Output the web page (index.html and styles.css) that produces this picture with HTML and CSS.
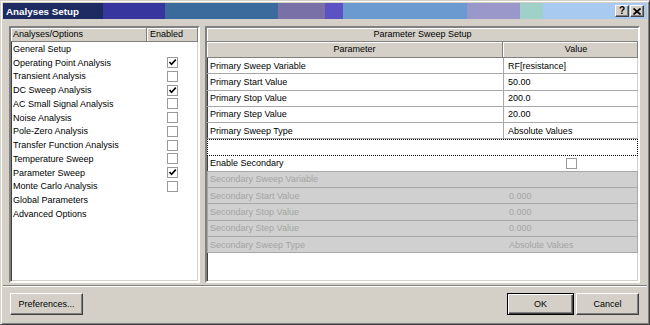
FILE: index.html
```html
<!DOCTYPE html>
<html>
<head>
<meta charset="utf-8">
<title>Analyses Setup</title>
<link rel="stylesheet" href="styles.css">
</head>
<body>
<div class="dialog">
  <div class="titlebar">
    <span class="title">Analyses Setup</span>
    <div class="tb-buttons">
      <span class="tb-btn tb-help">?</span>
      <span class="tb-btn tb-close"><svg width="8" height="7" viewBox="0 0 8 7"><path d="M0.5 0.5 L7.5 6.5 M7.5 0.5 L0.5 6.5" stroke="#000" stroke-width="1.7" fill="none"/></svg></span>
    </div>
  </div>
  <div class="main">
    <div class="panel left">
      <div class="lhead"><div class="lh-name">Analyses/Options</div><div class="lh-en">Enabled</div></div>
      <div class="lrow"><span class="lname">General Setup</span><span class="lcell"></span></div>
      <div class="lrow"><span class="lname">Operating Point Analysis</span><span class="lcell"><span class="cb"><svg width="9" height="9" viewBox="0 0 9 9"><path d="M1.5 4 L3.5 6.2 L7.8 1.6" stroke="#000" stroke-width="1.6" fill="none"/></svg></span></span></div>
      <div class="lrow"><span class="lname">Transient Analysis</span><span class="lcell"><span class="cb"></span></span></div>
      <div class="lrow"><span class="lname">DC Sweep Analysis</span><span class="lcell"><span class="cb"><svg width="9" height="9" viewBox="0 0 9 9"><path d="M1.5 4 L3.5 6.2 L7.8 1.6" stroke="#000" stroke-width="1.6" fill="none"/></svg></span></span></div>
      <div class="lrow"><span class="lname">AC Small Signal Analysis</span><span class="lcell"><span class="cb"></span></span></div>
      <div class="lrow"><span class="lname">Noise Analysis</span><span class="lcell"><span class="cb"></span></span></div>
      <div class="lrow"><span class="lname">Pole-Zero Analysis</span><span class="lcell"><span class="cb"></span></span></div>
      <div class="lrow"><span class="lname">Transfer Function Analysis</span><span class="lcell"><span class="cb"></span></span></div>
      <div class="lrow"><span class="lname">Temperature Sweep</span><span class="lcell"><span class="cb"></span></span></div>
      <div class="lrow"><span class="lname">Parameter Sweep</span><span class="lcell"><span class="cb"><svg width="9" height="9" viewBox="0 0 9 9"><path d="M1.5 4 L3.5 6.2 L7.8 1.6" stroke="#000" stroke-width="1.6" fill="none"/></svg></span></span></div>
      <div class="lrow"><span class="lname">Monte Carlo Analysis</span><span class="lcell"><span class="cb"></span></span></div>
      <div class="lrow"><span class="lname">Global Parameters</span><span class="lcell"></span></div>
      <div class="lrow"><span class="lname">Advanced Options</span><span class="lcell"></span></div>
    </div>
    <div class="panel right">
      <div class="rhead1">Parameter Sweep Setup</div>
      <div class="rhead2"><div class="rh-param">Parameter</div><div class="rh-val">Value</div></div>
      <div class="rrow"><div class="rparam">Primary Sweep Variable</div><div class="rval">RF[resistance]</div></div>
      <div class="rrow"><div class="rparam">Primary Start Value</div><div class="rval">50.00</div></div>
      <div class="rrow"><div class="rparam">Primary Stop Value</div><div class="rval">200.0</div></div>
      <div class="rrow"><div class="rparam">Primary Step Value</div><div class="rval">20.00</div></div>
      <div class="rrow"><div class="rparam">Primary Sweep Type</div><div class="rval">Absolute Values</div></div>
      <div class="rrow focus"></div>
      <div class="rrow plain"><div class="rparam">Enable Secondary</div><div class="rval center"><span class="cb"></span></div></div>
      <div class="rrow dis"><div class="rparam">Secondary Sweep Variable</div><div class="rval"></div></div>
      <div class="rrow dis"><div class="rparam">Secondary Start Value</div><div class="rval">0.000</div></div>
      <div class="rrow dis"><div class="rparam">Secondary Stop Value</div><div class="rval">0.000</div></div>
      <div class="rrow dis"><div class="rparam">Secondary Step Value</div><div class="rval">0.000</div></div>
      <div class="rrow dis"><div class="rparam">Secondary Sweep Type</div><div class="rval">Absolute Values</div></div>
    </div>
  </div>
  <div class="sep"></div>
  <div class="footer">
    <button class="btn btn-pref">Preferences...</button>
    <div class="btn-group">
      <button class="btn btn-ok">OK</button>
      <button class="btn btn-cancel">Cancel</button>
    </div>
  </div>
</div>
</body>
</html>
```
FILE: styles.css
```css
* { box-sizing: border-box; }
html, body { margin: 0; padding: 0; background: #d4d0c8; }
body { font-family: "Liberation Sans", Arial, sans-serif; font-size: 9px; color: #000; }

.dialog {
  width: 650px; height: 325px;
  background: #d4d0c8;
  border: 1px solid;
  border-color: #d4d0c8 #404040 #404040 #d4d0c8;
  box-shadow: inset 1px 1px #ffffff, inset -1px -1px #808080;
  padding: 2px;
  display: flex; flex-direction: column;
}

.titlebar {
  height: 16px;
  display: flex; align-items: center; justify-content: space-between;
  padding: 0 3px 0 3px;
  background: linear-gradient(to right,
    #1d2b62 0, #1d2b62 100px,
    #36369e 100px, #36369e 162px,
    #3b6a9c 162px, #3b6a9c 275px,
    #7a70a8 275px, #7a70a8 322px,
    #5c52c4 322px, #5c52c4 340px,
    #6a9ad0 340px, #6a9ad0 464px,
    #9a97cb 464px, #9a97cb 517px,
    #9fd1c8 517px, #9fd1c8 540px,
    #a8caf0 540px, #a8caf0 644px);
}
.title { color: #fff; font-weight: bold; font-size: 9.8px; padding-left: 0; letter-spacing: 0; }
.tb-buttons { display: flex; gap: 1px; }
.tb-btn {
  width: 14px; height: 12px;
  background: #d4d0c8;
  border: 1px solid; border-color: #fff #404040 #404040 #fff;
  box-shadow: inset -1px -1px #808080;
  display: flex; align-items: center; justify-content: center;
  font-weight: bold; font-size: 10px; line-height: 1; color: #000;
}

.main { display: flex; gap: 5px; padding: 7px 7px 0 6px; }
.panel {
  height: 257px; background: #fff;
  border: 2px solid; border-color: #808080 #ffffff #ffffff #808080;
  box-shadow: inset 1px 1px #404040, inset -1px -1px #d4d0c8;
  overflow: hidden;
}
.panel.left { width: 191px; }
.panel.right { width: 435px; }

.lhead { display: flex; height: 14px; }
.lh-name, .lh-en {
  background: #d4d0c8; height: 14px; line-height: 13px;
  border-right: 1px solid #808080; border-bottom: 1px solid #808080;
  box-shadow: inset 1px 1px #fff;
}
.lh-name { width: 136px; padding-left: 2px; }
.lh-en { flex: 1; padding-left: 3px; }
.lrow { display: flex; height: 13.75px; align-items: center; }
.lname { width: 136px; padding-left: 2px; white-space: nowrap; }
.lcell { flex: 1; display: flex; justify-content: center; align-items: center; }

.cb {
  width: 11px; height: 11px; background: #fff;
  border: 1px solid #9a9a9a;
  display: flex; align-items: center; justify-content: center;
}

.rhead1 {
  height: 14px; line-height: 13px; text-align: center;
  background: #d4d0c8; border-bottom: 1px solid #808080;
  box-shadow: inset 1px 1px #fff;
}
.rhead2 { display: flex; height: 16px; }
.rh-param, .rh-val {
  background: #d4d0c8; line-height: 15px; text-align: center;
  border-right: 1px solid #808080; border-bottom: 1px solid #808080;
  box-shadow: inset 1px 1px #fff;
}
.rh-param { width: 296px; }
.rh-val { flex: 1; padding-left: 12px; }

.rrow { display: flex; height: 16.27px; border-bottom: 1px solid #a8a8a8; align-items: stretch; }
.rparam { width: 296px; padding-left: 3px; display: flex; align-items: center; white-space: nowrap; }
.rval { flex: 1; padding-left: 4px; display: flex; align-items: center; border-left: 1px solid #a8a8a8; white-space: nowrap; }
.rval.center { justify-content: center; padding-left: 0; }
.rrow.focus { border: 1px dotted #000; background: #fff; }
.rrow.plain .rval { border-left-color: transparent; }
.rrow.dis { background: #d0d0d0; color: #a4a4a4; border-left: 1px solid #a8a8a8; border-right: 1px solid #a8a8a8; }
.rrow.dis .rparam { padding-left: 2px; }
.rrow.dis .rval { border-left-color: transparent; }

.sep { margin-top: 2px; height: 2px; border-top: 1px solid #808080; border-bottom: 1px solid #fff; }

.footer { display: flex; justify-content: space-between; padding: 6px 8px 0 7px; }
.btn-group { display: flex; gap: 2px; }
.btn {
  font-family: "Liberation Sans", Arial, sans-serif; font-size: 9px; color: #000;
  height: 22px; background: #d4d0c8; padding: 0;
  border: 1px solid; border-color: #fff #404040 #404040 #fff;
  box-shadow: inset -1px -1px #808080;
}
.btn-pref { width: 73px; }
.btn-ok { width: 67px; border: 1px solid #000; box-shadow: inset 1px 1px #fff, inset -1px -1px #404040, inset -2px -2px #808080; }
.btn-cancel { width: 63px; }
```
